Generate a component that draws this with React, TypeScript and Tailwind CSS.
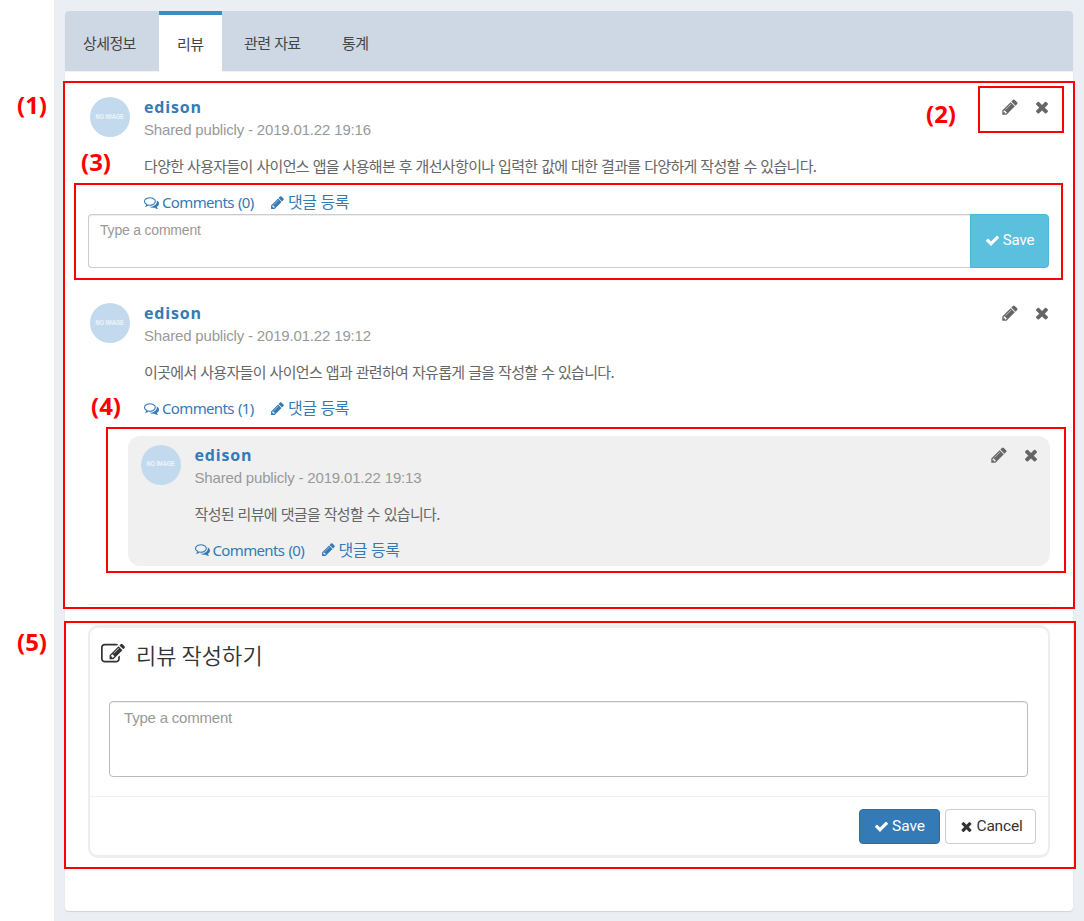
import React from "react";

const PATHS = {
  pencil:
    "M491 1536l91-91-235-235-91 91v107h128v128h107zm523-928q0-22-22-22-10 0-17 7l-542 542q-7 7-7 17 0 22 22 22 10 0 17-7l542-542q7-7 7-17zm-54-192l416 416-832 832h-416v-416zm683 96q0 53-37 90l-166 166-416-416 166-165q36-38 90-38 53 0 91 38l235 234q37 39 37 91z",
  times:
    "M1490 1322q0 40-28 68l-136 136q-28 28-68 28t-68-28l-294-294-294 294q-28 28-68 28t-68-28l-136-136q-28-28-28-68t28-68l294-294-294-294q-28-28-28-68t28-68l136-136q28-28 68-28t68 28l294 294 294-294q28-28 68-28t68 28l136 136q28 28 28 68t-28 68l-294 294 294 294q28 28 28 68z",
  check:
    "M1671 566q0 40-28 68l-724 724-136 136q-28 28-68 28t-68-28l-136-136-362-362q-28-28-28-68t28-68l136-136q28-28 68-28t68 28l294 295 656-657q28-28 68-28t68 28l136 136q28 28 28 68z",
  edit:
    "M888 1184l116-116-152-152-116 116v56h96v96h56zm440-720q-16-16-33 1l-350 350q-17 17-1 33t33-1l350-350q17-17 1-33zm80 594v190q0 119-84.5 203.5t-203.5 84.5h-832q-119 0-203.5-84.5t-84.5-203.5v-832q0-119 84.5-203.5t203.5-84.5h832q63 0 117 25 15 7 18 23 3 17-9 29l-49 49q-14 14-32 8-23-6-45-6h-832q-66 0-113 47t-47 113v832q0 66 47 113t113 47h832q66 0 113-47t47-113v-126q0-13 9-22l64-64q15-15 35-7t20 29zm-96-738l288 288-672 672h-288v-288zm444 132l-92 92-288-288 92-92q28-28 68-28t68 28l152 152q28 28 28 68t-28 68z",
  comments:
    "M704 384q-153 0-286 52t-211.5 141-78.5 191q0 82 53 158t149 132l97 56-35 84q34-20 62-39l44-31 53 10q78 14 153 14 153 0 286-52t211.5-141 78.5-191-78.5-191-211.5-141-286-52zm0-128q191 0 353.5 68.5t256.5 186.5 94 257-94 257-256.5 186.5-353.5 68.5q-86 0-176-16-124 88-278 128-36 9-86 16h-3q-11 0-20.5-8t-11.5-21q-1-3-1-6.5t.5-6.5 2-6l2.5-5 3.5-5.5 4-5 4.5-5 4-4.5q5-6 23-25t26-29.5 22.5-29 25-38.5 20.5-44q-124-72-195-177t-71-224q0-139 94-257t256.5-186.5 353.5-68.5zm822 1169q10 24 20.5 44t25 38.5 22.5 29 26 29.5 23 25q1 1 4 4.5t4.5 5 4 5 3.5 5.5l2.5 5 2 6 .5 6.5-1 6.5q-3 14-13 22t-22 7q-50-7-86-16-154-40-278-128-90 16-176 16-271 0-472-132 58 4 88 4 161 0 309-45t264-129q125-92 192-212t67-254q0-77-23-152 129 71 204 178t75 230q0 120-71 224.5t-195 176.5z",
};

function Icon({ name, className }: { name: keyof typeof PATHS; className: string }) {
  return (
    <svg viewBox="0 0 1792 1792" fill="currentColor" className={`shrink-0 ${className}`}>
      <path d={PATHS[name]} />
    </svg>
  );
}

function Avatar() {
  return (
    <div className="flex size-10 shrink-0 items-center justify-center rounded-full bg-[#c3daee] font-['Liberation_Sans'] text-[7px] font-bold text-[#eef5fb]">
      <span className="scale-x-[0.8] whitespace-nowrap">NO IMAGE</span>
    </div>
  );
}

interface PostProps {
  date: string;
  body: string;
  count: number;
}

function Post({ date, body, count }: PostProps) {
  return (
    <div className="flex">
      <Avatar />
      <div className="ml-3.5 flex-1">
        <div className="flex h-[22px] items-start justify-between">
          <span className="font-['Open_Sans','Noto_Sans',sans-serif] text-[16px] leading-[21px] font-bold tracking-[0.85px] text-[#337ab7]">
            edison
          </span>
          <span className="-mr-px flex gap-[14px] pt-px text-[#666]">
            <Icon name="pencil" className="size-[18px]" />
            <Icon name="times" className="size-[18px]" />
          </span>
        </div>
        <div className="h-[22px] font-['Liberation_Sans',sans-serif] text-[15px] leading-[22px] tracking-[-0.17px] text-[#999]">
          Shared publicly - {date}
        </div>
        <p className="mt-[14px] h-[22px] text-[15px] leading-[22px] tracking-[-0.67px] whitespace-nowrap text-[#666] [word-spacing:1px]">
          {body}
        </p>
        <div className="mt-[14px] flex h-[22px] items-center font-['Noto_Sans','Noto_Sans_CJK_KR',sans-serif] text-[15px] leading-[22px] text-[#337ab7]">
          <Icon name="comments" className="mr-[3px] size-[15px]" />
          <span className="w-[108px] tracking-[-0.65px] whitespace-nowrap [word-spacing:1px]">Comments ({count})</span>
          <Icon name="pencil" className="mr-[3px] size-[15px]" />
          <span className="text-[16px] tracking-[-0.4px] whitespace-nowrap">댓글 등록</span>
        </div>
      </div>
    </div>
  );
}

const TABS = [
  { label: "상세정보", box: "w-[94px] pl-[18px]" },
  { label: "리뷰", box: "w-[63px] pl-[18px] -mb-px border-t-4 border-[#3c8dbc] bg-white pb-[4px]" },
  { label: "관련 자료", box: "w-[98px] pl-[22px]" },
  { label: "통계", box: "pl-[22px]" },
];

export default function App() {
  return (
    <div className="relative flex h-[921px] w-[1084px] overflow-hidden bg-white pl-[54px] font-['Noto_Sans_CJK_KR',sans-serif]">
      <div className="flex-1 bg-[#ebeff4] pt-[11px] pr-[11px] pl-[11px]">
        <main className="h-[900px] rounded bg-white shadow-[0_1px_1px_rgba(0,0,0,0.12)]">
          <nav className="flex h-[61px] rounded-t border-b border-[#f0f2f5] bg-[#ced8e4] text-[15px] tracking-[-0.6px] text-[#444] [word-spacing:1px]">
            {TABS.map((tab) => (
              <div key={tab.label} className={`flex items-center whitespace-nowrap ${tab.box}`}>
                <span className="pt-[5px]">{tab.label}</span>
              </div>
            ))}
          </nav>

          <div className="pr-[23px] pl-[23px]">
            <section className="h-[533px] border-b border-[#eee] pt-[25px]">
              <div className="pl-0.5">
                <Post
                  date="2019.01.22 19:16"
                  body="다양한 사용자들이 사이언스 앱을 사용해본 후 개선사항이나 입력한 값에 대한 결과를 다양하게 작성할 수 있습니다."
                  count={0}
                />
              </div>
              <div className="mt-px mr-px flex h-[54px]">
                <div className="flex-1 rounded-l border border-r-0 border-[#ccc] px-[11px] pt-[6px] font-['Liberation_Sans',sans-serif] text-[14px] leading-[18px] tracking-[-0.2px] text-[#999] shadow-[inset_0_1px_1px_rgba(0,0,0,0.075)]">
                  Type a comment
                </div>
                <button className="flex w-[79px] items-center justify-center gap-[3px] rounded-r border border-[#46b8da] bg-[#5bc0de] pb-px font-['Roboto',sans-serif] text-[15px] tracking-[-0.2px] text-white">
                  <Icon name="check" className="size-[15px]" />
                  Save
                </button>
              </div>

              <div className="mt-[35px] pl-0.5">
                <Post
                  date="2019.01.22 19:12"
                  body="이곳에서 사용자들이 사이언스 앱과 관련하여 자유롭게 글을 작성할 수 있습니다."
                  count={1}
                />
              </div>
              <div className="mt-[17px] ml-10 h-[130px] w-[922px] rounded-xl bg-[#f0f0f0] pt-[8.5px] pr-[11px] pl-[12.5px]">
                <Post date="2019.01.22 19:13" body="작성된 리뷰에 댓글을 작성할 수 있습니다." count={0} />
              </div>
            </section>

            <section className="mt-5 h-[233px] rounded-[10px] border-2 border-t-[3px] border-b-[3px] border-[#eee]">
              <h2 className="flex h-[54px] items-center pl-[11px] text-[22px] text-[#333]">
                <Icon name="edit" className="mr-[11px] mb-0.5 size-6" />
                <span className="mb-0.5 font-[350] tracking-[0.05px]">리뷰 작성하기</span>
              </h2>
              <div className="mt-[19px] mr-5 ml-[19px] h-[76px] rounded border border-[#bbb] px-3.5 pt-[7px] font-['Liberation_Sans',sans-serif] text-[15px] leading-[18px] tracking-[-0.2px] text-[#999] shadow-[inset_0_1px_1px_rgba(0,0,0,0.075)]">
                Type a comment
              </div>
              <footer className="mt-[19px] flex justify-end gap-[5px] border-t border-[#f0f0f0] pt-3 pr-3 font-['Roboto',sans-serif] text-[15.5px]">
                <button className="flex h-[35px] w-[81px] items-center justify-center gap-[3px] rounded border border-[#2e6da4] bg-[#337ab7] text-white">
                  <Icon name="check" className="size-[15px]" />
                  Save
                </button>
                <button className="flex h-[35px] w-[91px] items-center justify-center gap-[3px] rounded border border-[#ccc] bg-white tracking-[-0.2px] text-[#333]">
                  <Icon name="times" className="size-[15px]" />
                  Cancel
                </button>
              </footer>
            </section>
          </div>
        </main>
      </div>

      <div className="absolute top-[81px] left-[63px] h-[528px] w-[1012px] border-2 border-[#f00]" />
      <div className="absolute top-[86px] left-[978px] h-[47px] w-[86px] border-2 border-[#f00]" />
      <div className="absolute top-[183px] left-[74px] h-[97px] w-[989px] border-2 border-[#f00]" />
      <div className="absolute top-[427px] left-[106px] h-[146px] w-[960px] border-2 border-[#f00]" />
      <div className="absolute top-[621px] left-[64px] h-[248px] w-[1012px] border-2 border-[#f00]" />
      <div className="font-['Noto_Sans',sans-serif] text-[24px] leading-8 font-bold text-[#f00]">
        <span className="absolute top-[89px] left-[17px]">(1)</span>
        <span className="absolute top-[98px] left-[926px]">(2)</span>
        <span className="absolute top-[146px] left-[81px]">(3)</span>
        <span className="absolute top-[390px] left-[91px]">(4)</span>
        <span className="absolute top-[626px] left-[17px]">(5)</span>
      </div>
    </div>
  );
}
